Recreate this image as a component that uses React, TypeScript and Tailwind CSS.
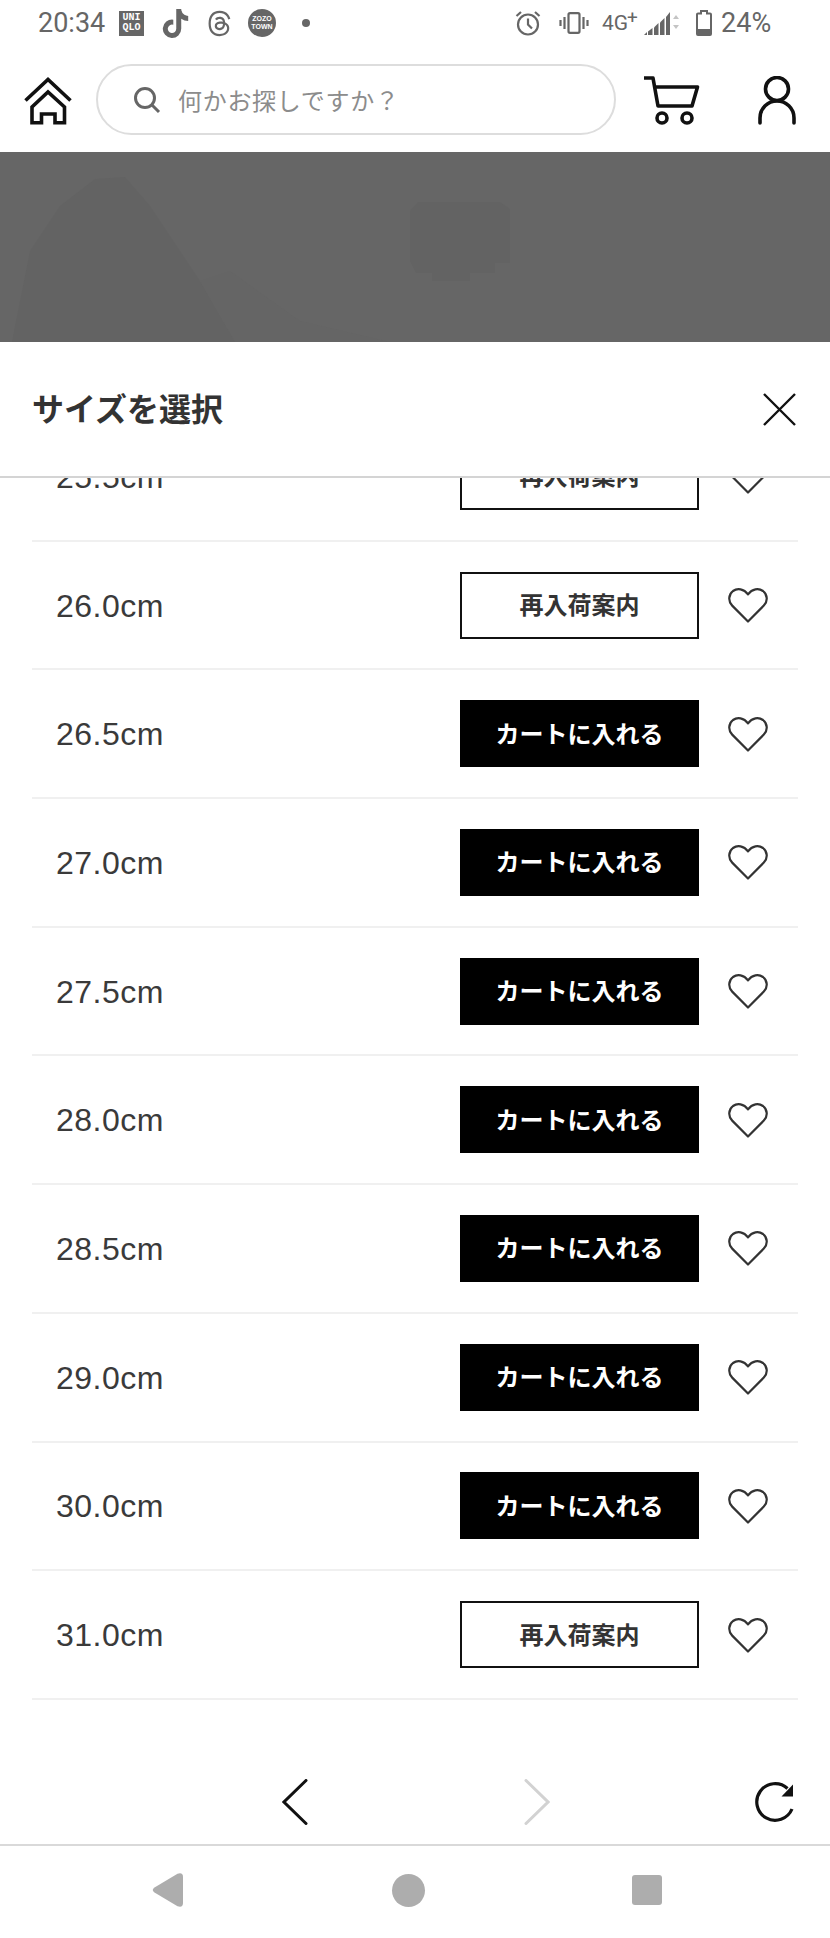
import React from "react";
import { FaTiktok, FaThreads } from "react-icons/fa6";

const Heart = () => (
  <svg width="40" height="36" viewBox="0 0 40 36" fill="none" stroke="#333" strokeWidth="2.2" strokeLinejoin="round">
    <path d="M20 34.5 L4.2 18.6 C-0.2 14 0.6 7.4 5 4 C9.4 0.8 15.8 1.6 20 7.4 C24.2 1.6 30.6 0.8 35 4 C39.4 7.4 40.2 14 35.8 18.6 Z" />
  </svg>
);

const rows: [string, boolean][] = [
  ["25.5cm", false],
  ["26.0cm", false],
  ["26.5cm", true],
  ["27.0cm", true],
  ["27.5cm", true],
  ["28.0cm", true],
  ["28.5cm", true],
  ["29.0cm", true],
  ["30.0cm", true],
  ["31.0cm", false],
];

const jp = "font-['Noto_Sans_CJK_JP','Noto_Sans',sans-serif]";

export default function App() {
  return (
    <div className={`w-[830px] h-[1938px] bg-white flex flex-col overflow-hidden ${jp}`}>
      {/* status bar */}
      <div className="h-[50px] flex items-center text-[#666] font-['Roboto',sans-serif] shrink-0">
        <span className="ml-[38px] text-[27px] leading-none mt-[-3px] w-[72px]">20:34</span>
        <div className="ml-[9px] w-[25px] h-[25px] mt-[-4px] bg-[#666] text-white flex flex-col items-center justify-center font-['Liberation_Mono',monospace] font-bold text-[10px] leading-[10px]">
          <span>UNI</span>
          <span>QLO</span>
        </div>
        <FaTiktok className="ml-[17px] mt-[-4px]" size={29} color="#666" />
        <FaThreads className="ml-[16px] mt-[-4px]" size={27} color="#666" />
        <div className="ml-[15px] w-[28px] h-[28px] mt-[-4px] rounded-full bg-[#666] text-white flex flex-col items-center justify-center font-['Liberation_Sans',sans-serif] font-bold text-[7px] leading-[8px]">
          <span>ZOZO</span>
          <span>TOWN</span>
        </div>
        <div className="ml-[26px] w-[8px] h-[8px] mt-[-4px] rounded-full bg-[#666]" />
        <svg className="ml-[205px] mt-[-4px]" width="26" height="26" viewBox="0 0 26 26" fill="none" stroke="#666" strokeWidth="2.2">
          <circle cx="13" cy="14.5" r="10" />
          <path d="M13 8.5 V14.5 L17 18.5 M1.5 6 L6 2 M24.5 6 L20 2" />
        </svg>
        <svg className="ml-[18px] mt-[-4px]" width="30" height="22" viewBox="0 0 30 22" fill="none" stroke="#666" strokeWidth="2.2">
          <rect x="9.5" y="1.2" width="11" height="19.6" rx="1.5" />
          <path d="M5.5 5 V17 M24.5 5 V17 M1.5 8 V14 M28.5 8 V14" />
        </svg>
        <span className="ml-[13px] text-[21px] leading-none mt-[-3px] relative">
          4G<span className="absolute left-[25px] top-[-5px] text-[19px]">+</span>
        </span>
        <svg className="ml-[16px] mt-[-4px]" width="36" height="25" viewBox="0 0 36 25" fill="#666">
          <path d="M0 24 H3 V21 Z" />
          <path d="M4 24 H8.5 V17 L4 20.5 Z" />
          <path d="M10 24 H14.5 V12 L10 16.5 Z" />
          <path d="M16 24 H20.5 V7 L16 11.5 Z" />
          <path d="M22 24 H26 V1 L22 6 Z" />
          <path d="M29 8 L32 4 L35 8 Z M29 14 L32 18 L35 14 Z" fill="#c4c4c4" />
        </svg>
        <svg className="ml-[16px] mt-[-4px]" width="16" height="26" viewBox="0 0 16 26" fill="none">
          <path d="M5 1 H11 V3.5 H14 A1 1 0 0 1 15 4.5 V24 A1 1 0 0 1 14 25 H2 A1 1 0 0 1 1 24 V4.5 A1 1 0 0 1 2 3.5 H5 Z" stroke="#666" strokeWidth="2" />
          <rect x="1" y="19" width="14" height="6" fill="#666" />
        </svg>
        <span className="ml-[9px] text-[27px] leading-none mt-[-3px]">24%</span>
      </div>

      {/* header */}
      <div className="h-[102px] flex items-center shrink-0">
        <svg className="ml-[24px]" width="48" height="48" viewBox="24 76 48 48" fill="none" stroke="#111" strokeWidth="3.6">
          <path d="M25.5 99.5 L48 78.5 L70.5 99.5" />
          <path d="M32 121.8 V106 L48 91 L64.5 106 V121.8 H55 V113 H41.5 V121.8 Z" />
        </svg>
        <div className="ml-[24px] w-[520px] h-[71px] mt-[-3px] rounded-full border-2 border-[#dddddd] flex items-center">
          <svg className="ml-[35px]" width="28" height="28" viewBox="0 0 28 28" fill="none" stroke="#666" strokeWidth="3">
            <circle cx="12" cy="12" r="9.5" />
            <path d="M18.5 18.5 L26 26" />
          </svg>
          <span className="ml-[17px] text-[24px] leading-none text-[#8c8c8c] tracking-[0.7px]">何かお探しですか？</span>
        </div>
        <svg className="ml-[28px]" width="56" height="50" viewBox="643 75 56 50" fill="none" stroke="#111" strokeWidth="3.6">
          <path d="M643 77 H652 L657 105 H691 L696.5 86 H654" strokeLinejoin="round" />
          <circle cx="661" cy="117" r="5" />
          <circle cx="686" cy="117" r="5" />
        </svg>
        <svg className="ml-[58px]" width="40" height="50" viewBox="756 75 40 50" fill="none" stroke="#111" strokeWidth="3.6" strokeLinecap="round">
          <circle cx="775" cy="88" r="11.5" />
          <path d="M758 122 V117 C758 107 766 100 775 100 C784 100 792 107 792 117 V122" />
        </svg>
      </div>

      {/* dimmed page */}
      <div className="h-[190px] bg-[#666666] shrink-0">
        <svg className="block" width="830" height="190" viewBox="0 151 830 190">
          <path d="M12 341 L30 250 L60 205 L95 178 L125 176 L150 205 L200 280 L235 341 Z" fill="#636363" />
          <path d="M235 341 L200 280 L230 270 L300 320 L390 341 Z" fill="#656565" />
          <path d="M418 201 H500 L510 208 V262 H495 V272 H470 V280 H432 V272 H416 L410 260 V210 Z" fill="#636363" />
        </svg>
      </div>

      {/* sheet title */}
      <div className="h-[136px] shrink-0 flex items-center justify-between pl-[32px] pr-[34px] border-b-2 border-[#d4d4d4] bg-white">
        <h1 className="text-[32px] leading-none font-bold text-[#333] mt-[-4px]">サイズを選択</h1>
        <svg className="mt-[0px]" width="33" height="33" viewBox="0 0 33 33" stroke="#111" strokeWidth="2.4">
          <path d="M1 1 L32 32 M32 1 L1 32" />
        </svg>
      </div>

      {/* list */}
      <div className="flex-1 overflow-hidden min-h-0">
        <div className="mt-[-65px] mx-[32px]">
          {rows.map(([size, inStock]) => (
            <div key={size} className="h-[128.7px] flex items-center border-b-2 border-[#f0f0f0] pl-[24px]">
              <span className="flex-1 text-[32px] leading-none text-[#3a3a3a] font-['Liberation_Sans',sans-serif] tracking-[0.5px] mt-[1px]">{size}</span>
              {inStock ? (
                <button className="w-[239px] h-[67px] pb-[2px] bg-black text-white text-[24px] font-bold leading-none">カートに入れる</button>
              ) : (
                <button className="w-[239px] h-[67px] pb-[2px] bg-white border-2 border-[#111] text-[#333] text-[24px] font-bold leading-none">再入荷案内</button>
              )}
              <div className="ml-[29px] mr-[30px] flex">
                <Heart />
              </div>
            </div>
          ))}
        </div>
      </div>

      {/* browser nav */}
      <div className="h-[108px] shrink-0 flex items-center border-b-2 border-[#d9d9d9] bg-white pt-[22px]">
        <svg className="ml-[282px]" width="26" height="46" viewBox="0 0 26 46" fill="none" stroke="#111" strokeWidth="3" strokeLinecap="round">
          <path d="M24 1.5 L2 23 L24 44.5" />
        </svg>
        <svg className="ml-[216px]" width="26" height="46" viewBox="0 0 26 46" fill="none" stroke="#d2d2d2" strokeWidth="3" strokeLinecap="round">
          <path d="M2 1.5 L24 23 L2 44.5" />
        </svg>
        <svg className="ml-[203px]" width="42" height="42" viewBox="0 0 42 42" fill="none">
          <path d="M39 28 A18.3 18.3 0 1 1 34.5 7.5" stroke="#111" strokeWidth="3.2" />
          <path d="M40 3.5 V15.5 H28.5 Z" fill="#111" />
        </svg>
      </div>

      {/* system nav */}
      <div className="h-[92px] shrink-0 flex items-center bg-white pb-[4px]">
        <svg className="ml-[152px]" width="32" height="36" viewBox="0 0 32 36" fill="#adadad">
          <path d="M2.5 15.5 L25.5 1.8 Q31 0 31 5 V31 Q31 36 25.5 34.2 L2.5 20.5 Q-1 18 2.5 15.5 Z" />
        </svg>
        <div className="ml-[208px] w-[33px] h-[33px] rounded-full bg-[#adadad]" />
        <div className="ml-[207px] w-[30px] h-[30px] rounded-[3px] bg-[#adadad]" />
      </div>
    </div>
  );
}
